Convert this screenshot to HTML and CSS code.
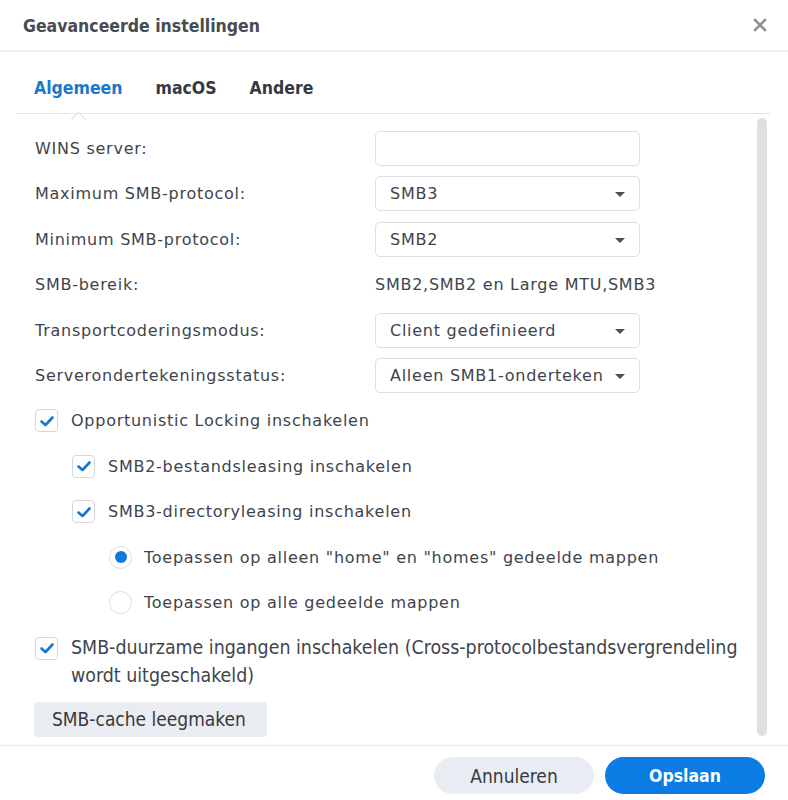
FILE: index.html
```html
<!DOCTYPE html>
<html lang="nl">
<head>
<meta charset="utf-8">
<link rel="stylesheet" href="styles.css">
</head>
<body>
<div class="dialog">
  <div class="header">
    <div class="title">Geavanceerde instellingen</div>
    <svg class="close" width="14" height="14" viewBox="0 0 14 14"><path d="M2 2 L12 12 M12 2 L2 12" stroke="#8c9198" stroke-width="2.6" stroke-linecap="square" fill="none"/></svg>
  </div>
  <div class="tabs">
    <div class="tab active">Algemeen<span class="caret"></span></div>
    <div class="tab">macOS</div>
    <div class="tab">Andere</div>
  </div>
  <div class="body">
    <div class="content">
      <div class="row"><div class="label">WINS server:</div><div class="field input"></div></div>
      <div class="row"><div class="label">Maximum SMB-protocol:</div><div class="field select">SMB3<span class="arrow"></span></div></div>
      <div class="row"><div class="label">Minimum SMB-protocol:</div><div class="field select">SMB2<span class="arrow"></span></div></div>
      <div class="row"><div class="label">SMB-bereik:</div><div class="value">SMB2,SMB2 en Large MTU,SMB3</div></div>
      <div class="row"><div class="label">Transportcoderingsmodus:</div><div class="field select">Client gedefinieerd<span class="arrow"></span></div></div>
      <div class="row"><div class="label">Serverondertekeningsstatus:</div><div class="field select">Alleen SMB1-onderteken<span class="arrow"></span></div></div>
      <div class="row check"><span class="box"><svg width="20" height="20" viewBox="0 0 20 20"><path d="M4.5 10.5 L8.5 14 L15.5 6.5" stroke="#1677d2" stroke-width="2.6" fill="none" stroke-linecap="round" stroke-linejoin="round"/></svg></span><span>Opportunistic Locking inschakelen</span></div>
      <div class="row check lvl2"><span class="box"><svg width="20" height="20" viewBox="0 0 20 20"><path d="M4.5 10.5 L8.5 14 L15.5 6.5" stroke="#1677d2" stroke-width="2.6" fill="none" stroke-linecap="round" stroke-linejoin="round"/></svg></span><span>SMB2-bestandsleasing inschakelen</span></div>
      <div class="row check lvl2"><span class="box"><svg width="20" height="20" viewBox="0 0 20 20"><path d="M4.5 10.5 L8.5 14 L15.5 6.5" stroke="#1677d2" stroke-width="2.6" fill="none" stroke-linecap="round" stroke-linejoin="round"/></svg></span><span>SMB3-directoryleasing inschakelen</span></div>
      <div class="row check lvl3"><span class="radio on"></span><span>Toepassen op alleen "home" en "homes" gedeelde mappen</span></div>
      <div class="row check lvl3"><span class="radio"></span><span>Toepassen op alle gedeelde mappen</span></div>
      <div class="row check wrap"><span class="box"><svg width="20" height="20" viewBox="0 0 20 20"><path d="M4.5 10.5 L8.5 14 L15.5 6.5" stroke="#1677d2" stroke-width="2.6" fill="none" stroke-linecap="round" stroke-linejoin="round"/></svg></span><span class="cond">SMB-duurzame ingangen inschakelen (Cross-protocolbestandsvergrendeling wordt uitgeschakeld)</span></div>
      <div class="btnrow"><div class="btn-gray">SMB-cache leegmaken</div></div>
    </div>
    <div class="scrollbar"></div>
  </div>
  <div class="footer">
    <div class="btn cancel">Annuleren</div>
    <div class="btn save">Opslaan</div>
  </div>
</div>
</body>
</html>
```

FILE: styles.css
```css
* { box-sizing: border-box; }
html, body { margin: 0; padding: 0; background: #fff; }
body {
  font-family: "DejaVu Sans", Verdana, sans-serif;
  font-size: 16px;
  letter-spacing: 0.74px;
  color: #3e444b;
}
.dialog {
  width: 788px;
  height: 800px;
  display: flex;
  flex-direction: column;
  overflow: hidden;
}
.header {
  height: 52px;
  border-bottom: 2px solid #eeeff1;
  display: flex;
  align-items: center;
  justify-content: space-between;
  padding: 2px 21px 0 23px;
}
.title {
  font-family: "DejaVu Sans Condensed", "DejaVu Sans", sans-serif;
  font-weight: bold;
  font-size: 17.5px;
  letter-spacing: 0;
  color: #474c52;
}
.close { display: block; margin-top: -2px; }
.tabs {
  height: 62px;
  margin: 0 18px 0 16px;
  border-bottom: 1px solid #dfe2e6;
  display: flex;
  align-items: center;
  gap: 33px;
  padding: 10px 0 0 18px;
}
.tab {
  position: relative;
  font-family: "DejaVu Sans Condensed", "DejaVu Sans", sans-serif;
  font-weight: bold;
  font-size: 17.5px;
  letter-spacing: 0;
  color: #353a40;
}
.tab.active { color: #1a77c9; }
.caret {
  position: absolute;
  left: 50%;
  bottom: -27px;
  width: 11px;
  height: 11px;
  margin-left: -5px;
  background: #fff;
  border-left: 1px solid #dfe2e6;
  border-top: 1px solid #dfe2e6;
  transform: rotate(45deg);
}
.body {
  flex: 1;
  display: flex;
  position: relative;
  border-bottom: 1px solid #e8eaed;
}
.content {
  flex: 1;
  padding: 17px 0 0 35px;
  display: flex;
  flex-direction: column;
  gap: 10.4px;
}
.scrollbar {
  width: 10px;
  margin: 4px 21px 9px 0;
  background: #dedfe1;
  border-radius: 5px;
}
.row {
  display: flex;
  align-items: center;
  min-height: 35px;
}
.label { width: 340px; }
.field {
  width: 265px;
  height: 35px;
  border: 1px solid #dcdfe3;
  border-radius: 5px;
  background: #fff;
}
.select {
  position: relative;
  display: flex;
  align-items: center;
  padding-left: 14px;
}
.arrow {
  position: absolute;
  right: 14px;
  top: 15px;
  width: 0;
  height: 0;
  border-left: 5.5px solid transparent;
  border-right: 5.5px solid transparent;
  border-top: 5px solid #4b5057;
}
.check { gap: 13px; }
.check.lvl2 { padding-left: 37px; }
.check.lvl3 { padding-left: 74px; gap: 12px; }
.box {
  flex: none;
  width: 23px;
  height: 23px;
  border: 1px solid #d4d8dd;
  border-radius: 4px;
  display: flex;
  align-items: center;
  justify-content: center;
}
.box svg { display: block; }
.radio {
  flex: none;
  width: 23px;
  height: 23px;
  border: 1px solid #dadee3;
  border-radius: 50%;
  position: relative;
  background: #fff;
}
.radio.on::after {
  content: "";
  position: absolute;
  left: 4.5px;
  top: 4.5px;
  width: 12px;
  height: 12px;
  border-radius: 50%;
  background: #1077de;
}
.check.wrap {
  align-items: flex-start;
  padding-top: 4px;
  padding-right: 8px;
  line-height: 28px;
}
.check.wrap .box { margin-top: 2.5px; }
.cond {
  font-family: "DejaVu Sans Condensed", "DejaVu Sans", sans-serif;
  font-size: 19.4px;
  letter-spacing: 0;
}
.btnrow { display: flex; margin-top: 1px; }
.btn-gray {
  height: 35px;
  padding: 0 18px;
  width: 233px;
  margin-left: -1px;
  background: #e9edf2;
  border-radius: 4px;
  display: flex;
  align-items: center;
  font-family: "DejaVu Sans Condensed", "DejaVu Sans", sans-serif;
  font-size: 19px;
  letter-spacing: 0;
  color: #353a40;
}
.footer {
  height: 54px;
  display: flex;
  justify-content: flex-end;
  align-items: flex-start;
  gap: 11px;
  padding: 11px 23px 0 0;
}
.btn {
  width: 160px;
  height: 37px;
  border-radius: 19px;
  display: flex;
  align-items: center;
  justify-content: center;
  font-family: "DejaVu Sans Condensed", "DejaVu Sans", sans-serif;
  font-size: 19px;
  letter-spacing: 0;
}
.cancel { background: #e9edf3; color: #353a40; }
.save { background: #0a7ce4; color: #fff; font-weight: bold; font-size: 17.5px; }
```
